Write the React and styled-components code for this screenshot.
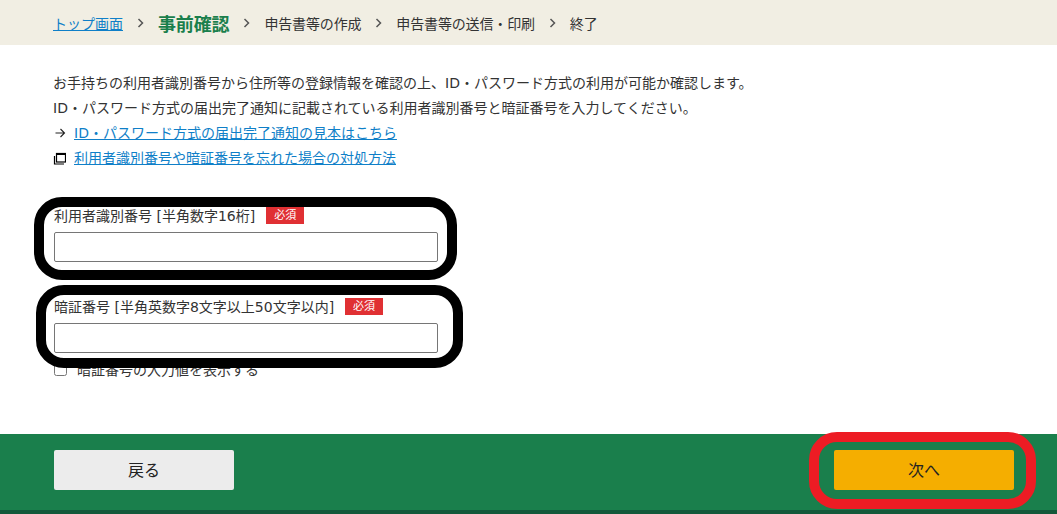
import React from "react";
import styled, { createGlobalStyle } from "styled-components";

const GlobalStyle = createGlobalStyle`
    html, body {
        margin: 0;
        padding: 0;
        background: #fff;
    }
    body {
        font-family: "DejaVu Sans", "Noto Sans CJK JP", sans-serif;
        font-size: 14px;
        color: #333;
    }
`;

const Page = styled.div`
    position: relative;
    width: 1057px;
    height: 514px;
    overflow: hidden;
    display: flex;
    flex-direction: column;
`;

const Steps = styled.nav`
    height: 45px;
    padding-left: 53px;
    background: #f1eee3;
    display: flex;
    align-items: center;
    flex-shrink: 0;
`;

const StepText = styled.span`
    font-size: ${(p) => (p.$current ? "18px" : "14px")};
    font-weight: ${(p) => (p.$current ? 700 : 400)};
    color: ${(p) => (p.$current ? "#1a7f4c" : "#333")};
    letter-spacing: -0.15px;
    white-space: nowrap;
`;

const TextLink = styled.a`
    color: #0f7fc8;
    text-decoration: underline;
    white-space: nowrap;
`;

const Chevron = styled.svg`
    width: 7px;
    height: 10px;
    margin: 0 14px;
    flex-shrink: 0;
`;

const Main = styled.main`
    flex: 1;
    padding: 26px 53px 0;
`;

const Line = styled.p`
    margin: 0;
    height: 25px;
    line-height: 25px;
    white-space: nowrap;
    display: flex;
    align-items: center;
`;

const LineIcon = styled.svg`
    width: 13px;
    height: 13px;
    margin-right: 8px;
    flex-shrink: 0;
`;

const Form = styled.form`
    margin-top: 35px;
    display: flex;
    flex-direction: column;
    gap: 35px;
`;

const Field = styled.div`
    display: flex;
    flex-direction: column;
    width: 385px;
`;

const LabelRow = styled.div`
    height: 19px;
    display: flex;
    align-items: center;
    gap: 11px;
    margin-bottom: 7px;
    margin-left: 1px;
    white-space: nowrap;
`;

const LabelText = styled.span`
    margin-bottom: 2px;
`;

const Required = styled.span`
    width: 38px;
    height: 17px;
    background: #e03033;
    color: #fff;
    font-size: 11px;
    line-height: 17px;
    text-align: center;
`;

const TextInput = styled.input`
    box-sizing: border-box;
    width: 384px;
    height: 30px;
    margin: 0 0 0 1px;
    border: 1px solid #767676;
    border-radius: 2px;
    background: #fff;
`;

const CheckRow = styled.label`
    display: flex;
    align-items: center;
    gap: 10px;
    height: 20px;
    margin: 6px 0 0 1px;
    white-space: nowrap;
`;

const CheckBox = styled.input`
    width: 13px;
    height: 13px;
    margin: 0;
`;

const Footer = styled.footer`
    box-sizing: border-box;
    height: 80px;
    flex-shrink: 0;
    padding: 16px 43px 0 54px;
    background: #1a7f4c;
    border-bottom: 4px solid #13583a;
    display: flex;
    justify-content: space-between;
    align-items: flex-start;
`;

const FooterButton = styled.button`
    width: 180px;
    height: 40px;
    padding: 0 0 2px;
    border: none;
    border-radius: 2px;
    background: ${(p) => (p.$primary ? "#f5ae00" : "#ececec")};
    color: #222;
    font-family: inherit;
    font-size: 16px;
`;

const Callout = styled.div`
    position: absolute;
    box-sizing: border-box;
    left: ${(p) => p.$x}px;
    top: ${(p) => p.$y}px;
    width: ${(p) => p.$w}px;
    height: ${(p) => p.$h}px;
    border: 10px solid ${(p) => p.$color || "#000"};
    border-radius: 28px;
    pointer-events: none;
`;

function StepArrow() {
    return (
        <Chevron viewBox="0 0 7 10" fill="none" stroke="#555" strokeWidth="1.5">
            <path d="M1.5 1l4 4-4 4" />
        </Chevron>
    );
}

export default function App() {
    return (
        <Page>
            <GlobalStyle />
            <Steps>
                <TextLink href="#">トップ画面</TextLink>
                <StepArrow />
                <StepText $current>事前確認</StepText>
                <StepArrow />
                <StepText>申告書等の作成</StepText>
                <StepArrow />
                <StepText>申告書等の送信・印刷</StepText>
                <StepArrow />
                <StepText>終了</StepText>
            </Steps>
            <Main>
                <Line>お手持ちの利用者識別番号から住所等の登録情報を確認の上、ID・パスワード方式の利用が可能か確認します。</Line>
                <Line>ID・パスワード方式の届出完了通知に記載されている利用者識別番号と暗証番号を入力してください。</Line>
                <Line>
                    <LineIcon viewBox="0 0 13 13" fill="none" stroke="#222" strokeWidth="1.1">
                        <path d="M2.5 6h9M7.5 2l4 4-4 4" />
                    </LineIcon>
                    <TextLink href="#">ID・パスワード方式の届出完了通知の見本はこちら</TextLink>
                </Line>
                <Line>
                    <LineIcon viewBox="0 0 13 13" fill="none" stroke="#000" strokeWidth="1.2">
                        <path d="M1.5 4v8H11" />
                        <rect x="3.5" y="1.5" width="9" height="8.5" />
                        <path d="M3 2h10" strokeWidth="2" />
                    </LineIcon>
                    <TextLink href="#">利用者識別番号や暗証番号を忘れた場合の対処方法</TextLink>
                </Line>
                <Form>
                    <Field>
                        <LabelRow>
                            <LabelText>利用者識別番号 [半角数字16桁]</LabelText>
                            <Required>必須</Required>
                        </LabelRow>
                        <TextInput type="text" />
                    </Field>
                    <Field>
                        <LabelRow>
                            <LabelText>暗証番号 [半角英数字8文字以上50文字以内]</LabelText>
                            <Required>必須</Required>
                        </LabelRow>
                        <TextInput type="password" />
                        <CheckRow>
                            <CheckBox type="checkbox" />
                            暗証番号の入力値を表示する
                        </CheckRow>
                    </Field>
                </Form>
            </Main>
            <Footer>
                <FooterButton type="button">戻る</FooterButton>
                <FooterButton type="button" $primary>次へ</FooterButton>
            </Footer>
            <Callout $x={34} $y={197} $w={423} $h={83} />
            <Callout $x={36} $y={285} $w={427} $h={83} />
            <Callout $x={809} $y={432} $w={227} $h={77} $color="#ed1c24" />
        </Page>
    );
}
